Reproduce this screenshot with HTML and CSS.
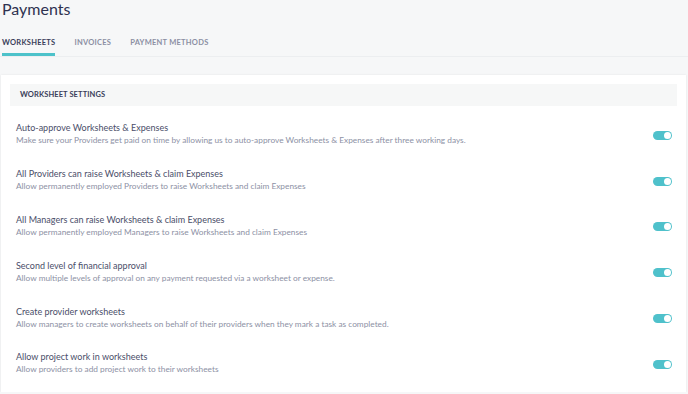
FILE: index.html
```html
<!DOCTYPE html>
<html lang="en">
<head>
  <meta charset="UTF-8" />
  <title>Payments</title>
  <link rel="stylesheet" href="styles.css">
</head>
<body>
  <h1 class="page-title">Payments</h1>

  <!-- Tabs -->
  <div class="tabs">
    <a class="tab active">Worksheets</a>
    <a class="tab">Invoices</a>
    <a class="tab">Payment methods</a>
  </div>

  <div class="card">
    <div class="section-header">Worksheet settings</div>

    <div class="setting">
      <div class="setting-text">
        <div class="setting-title">Auto-approve Worksheets &amp; Expenses</div>
        <div class="setting-desc">Make sure your Providers get paid on time by allowing us to auto-approve Worksheets &amp; Expenses after three working days.</div>
      </div>
      <span class="toggle on"></span>
    </div>

    <div class="setting">
      <div class="setting-text">
        <div class="setting-title">All Providers can raise Worksheets &amp; claim Expenses</div>
        <div class="setting-desc">Allow permanently employed Providers to raise Worksheets and claim Expenses</div>
      </div>
      <span class="toggle on"></span>
    </div>

    <div class="setting">
      <div class="setting-text">
        <div class="setting-title">All Managers can raise Worksheets &amp; claim Expenses</div>
        <div class="setting-desc">Allow permanently employed Managers to raise Worksheets and claim Expenses</div>
      </div>
      <span class="toggle on"></span>
    </div>

    <div class="setting">
      <div class="setting-text">
        <div class="setting-title">Second level of financial approval</div>
        <div class="setting-desc">Allow multiple levels of approval on any payment requested via a worksheet or expense.</div>
      </div>
      <span class="toggle on"></span>
    </div>

    <div class="setting">
      <div class="setting-text">
        <div class="setting-title">Create provider worksheets</div>
        <div class="setting-desc">Allow managers to create worksheets on behalf of their providers when they mark a task as completed.</div>
      </div>
      <span class="toggle on"></span>
    </div>

    <div class="setting">
      <div class="setting-text">
        <div class="setting-title">Allow project work in worksheets</div>
        <div class="setting-desc">Allow providers to add project work to their worksheets</div>
      </div>
      <span class="toggle on"></span>
    </div>
  </div>
</body>
</html>
```

FILE: styles.css
```css
* { box-sizing: border-box; }

body {
  margin: 0;
  background-color: #f6f7f8;
  font-family: 'Lato', 'Open Sans', sans-serif;
  color: #3a3e5a;
  overflow: hidden;
}

.page-title {
  margin: 0;
  padding: 0 2px;
  font-size: 16px;
  font-weight: 400;
  line-height: 17px;
  color: #2e3250;
}

.tabs {
  display: flex;
  gap: 19px;
  margin-top: 17px;
  padding-left: 2px;
  border-bottom: 1px solid #eceef0;
}

.tab {
  font-size: 7.5px;
  font-weight: 700;
  letter-spacing: 0.25px;
  text-transform: uppercase;
  color: #8b8fa3;
  padding: 4px 0 6px;
  border-bottom: 3px solid transparent;
  cursor: pointer;
}

.tab.active {
  color: #3a3e5a;
  border-bottom-color: #4dc2ca;
}

.card {
  margin: 18px 2px 0 1px;
  padding: 9px 9px 6px;
  background: #fff;
  box-shadow: 0 0 2px rgba(0, 0, 0, 0.08);
}

.section-header {
  height: 22px;
  line-height: 22px;
  padding-left: 10px;
  background: #f6f7f7;
  font-size: 7.5px;
  font-weight: 700;
  letter-spacing: 0.1px;
  text-transform: uppercase;
  color: #3a3e5a;
  margin-bottom: 5px;
}

.setting {
  display: flex;
  align-items: center;
  justify-content: space-between;
  height: 45.8px;
  padding: 0 5px 0 6px;
}

.setting-title {
  font-size: 9px;
  line-height: 13px;
  color: #4a4e69;
}

.setting-desc {
  font-size: 8.3px;
  line-height: 12px;
  color: #8d91a5;
}

.toggle {
  position: relative;
  display: block;
  width: 19px;
  height: 9px;
  margin-top: 3px;
  border-radius: 5px;
  background: #4fc1cb;
  flex-shrink: 0;
}

.toggle::after {
  content: "";
  position: absolute;
  top: 1px;
  right: 1px;
  width: 7px;
  height: 7px;
  border-radius: 50%;
  background: #fff;
}
```
